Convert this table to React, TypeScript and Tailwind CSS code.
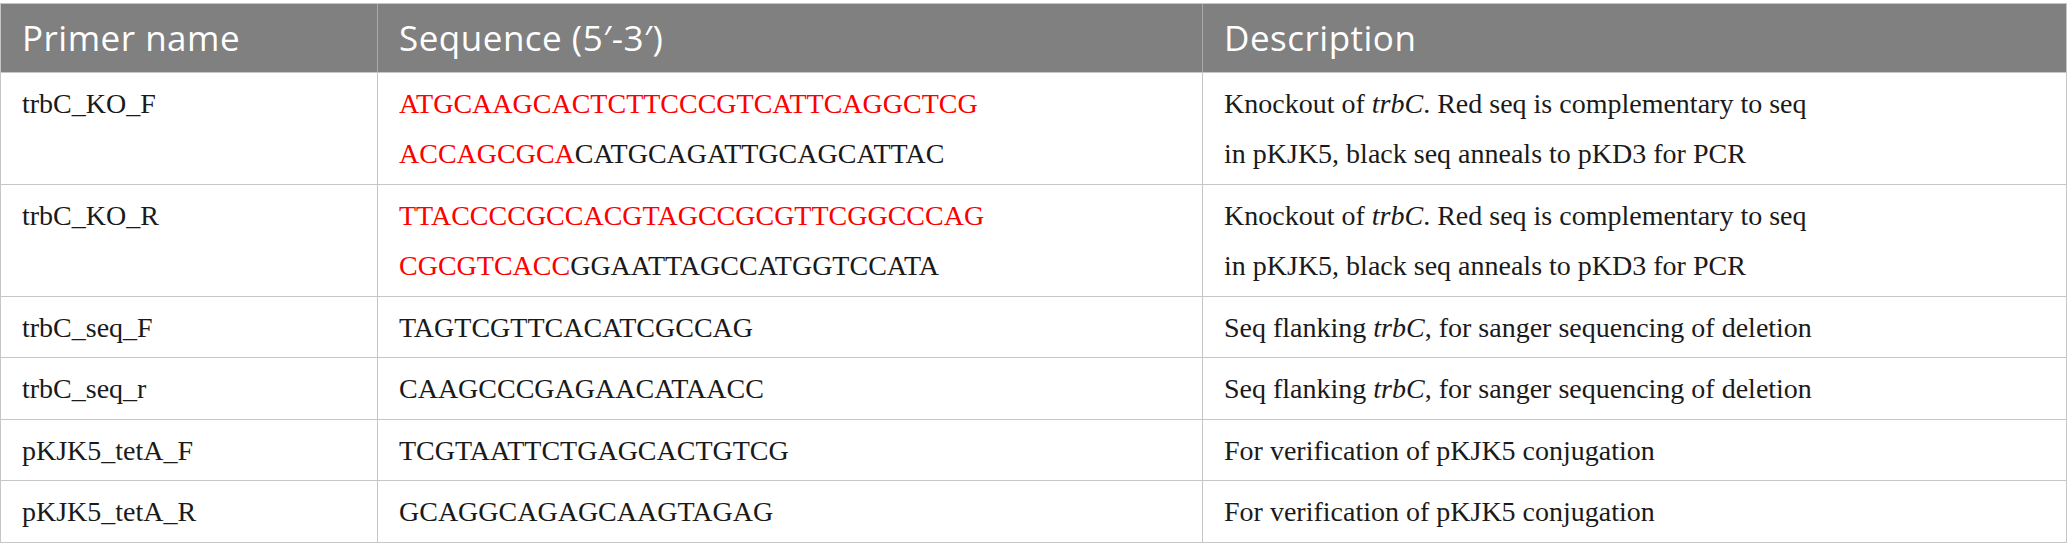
import React from 'react'

type Row = {
  name: string
  seq: React.ReactNode[]
  desc: React.ReactNode[]
  h: string
}

const Red = ({ children }: { children: React.ReactNode }) => (
  <span className="text-[#ff0000]">{children}</span>
)

const knockout = [
  <>
    Knockout of <i>trbC</i>. Red seq is complementary to seq
  </>,
  <>in pKJK5, black seq anneals to pKD3 for PCR</>,
]

const flanking = [
  <>
    Seq flanking <i>trbC</i>, for sanger sequencing of deletion
  </>,
]

const verify = [<>For verification of pKJK5 conjugation</>]

const rows: Row[] = [
  {
    name: 'trbC_KO_F',
    seq: [
      <Red>ATGCAAGCACTCTTCCCGTCATTCAGGCTCG</Red>,
      <>
        <Red>ACCAGCGCA</Red>CATGCAGATTGCAGCATTAC
      </>,
    ],
    desc: knockout,
    h: 'h-[112px]',
  },
  {
    name: 'trbC_KO_R',
    seq: [
      <Red>TTACCCCGCCACGTAGCCGCGTTCGGCCCAG</Red>,
      <>
        <Red>CGCGTCACC</Red>GGAATTAGCCATGGTCCATA
      </>,
    ],
    desc: knockout,
    h: 'h-[112px]',
  },
  { name: 'trbC_seq_F', seq: ['TAGTCGTTCACATCGCCAG'], desc: flanking, h: 'h-[61px]' },
  { name: 'trbC_seq_r', seq: ['CAAGCCCGAGAACATAACC'], desc: flanking, h: 'h-[62px]' },
  { name: 'pKJK5_tetA_F', seq: ['TCGTAATTCTGAGCACTGTCG'], desc: verify, h: 'h-[61px]' },
  { name: 'pKJK5_tetA_R', seq: ['GCAGGCAGAGCAAGTAGAG'], desc: verify, h: 'h-[61px]' },
]

const cols = 'grid grid-cols-[377px_825px_1fr]'

export default function App() {
  return (
    <div className="w-[2068px] h-[557px] bg-white pt-[3px]">
      <div className="w-[2067px] border border-[#c6c6c6]">
        {/* Header */}
        <div
          className={`${cols} h-[69px] bg-[#7f807f] border-b border-[#c6c6c6] text-white text-[35px] tracking-[0.5px] font-['Open_Sans',sans-serif]`}
        >
          <div className="flex items-center pl-[21px] border-r border-[#a9a9a9]">Primer name</div>
          <div className="flex items-center pl-[21px] border-r border-[#a9a9a9]">Sequence (5′-3′)</div>
          <div className="flex items-center pl-[21px]">Description</div>
        </div>

        {/* Body */}
        {rows.map((r, i) => (
          <div
            key={r.name}
            className={`${cols} ${r.h} ${i < rows.length - 1 ? 'border-b' : ''} border-[#c6c6c6] text-[#1a1a1a] text-[28px] leading-[50px] font-['Liberation_Serif',serif]`}
          >
            <div className="pl-[21px] pt-[6px] border-r border-[#c6c6c6]">{r.name}</div>
            <div className="pl-[21px] pt-[6px] border-r border-[#c6c6c6]">
              {r.seq.map((s, j) => (
                <div key={j}>{s}</div>
              ))}
            </div>
            <div className="pl-[21px] pt-[6px]">
              {r.desc.map((d, j) => (
                <div key={j}>{d}</div>
              ))}
            </div>
          </div>
        ))}
      </div>
    </div>
  )
}
